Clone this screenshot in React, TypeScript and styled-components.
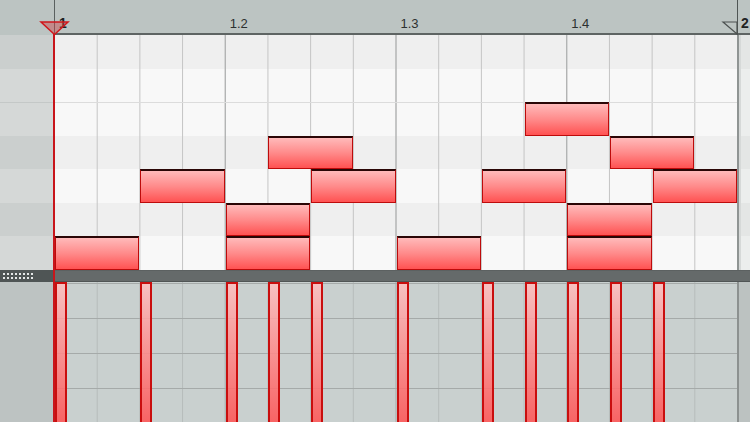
import React from 'react';
import styled, { createGlobalStyle } from 'styled-components';

const STEP = 683 / 16;
const BEAT = STEP * 4;

const GlobalStyle = createGlobalStyle`
  *, *::before, *::after { box-sizing: border-box; }
  html, body { margin: 0; padding: 0; background: #c9d0cf; }
  body { font-family: 'Liberation Sans', Arial, sans-serif; }
`;

const Editor = styled.div`
  position: relative;
  width: 750px;
  height: 422px;
  overflow: hidden;
  display: flex;
  flex-direction: column;
`;

const Section = styled.div<{ $height: number }>`
  display: grid;
  grid-template-columns: 54px 683px 1fr;
  height: ${(p) => p.$height}px;
  flex: none;
`;

/* ruler */
const Ruler = styled(Section)`
  background: #bcc4c2;
  box-shadow: inset 0 -2px #5e6463;
`;

const RulerGutter = styled.div`
  background: #bcc4c2;
`;

const RulerTrack = styled.div`
  display: grid;
  grid-template-columns: repeat(4, 1fr);
  background-image: linear-gradient(to right, #5a605f 1px, transparent 1px);
`;

const RulerCell = styled.div`
  display: flex;
  align-items: flex-end;
  padding: 0 0 5px 5px;
`;

const RulerLabel = styled.span<{ $bar?: boolean }>`
  font-size: ${(p) => (p.$bar ? 14 : 13)}px;
  font-weight: ${(p) => (p.$bar ? 700 : 400)};
  line-height: 1;
  color: ${(p) => (p.$bar ? '#1e2222' : '#2c3030')};
`;

const RulerEnd = styled.div`
  display: flex;
  align-items: flex-end;
  padding: 0 0 5px 4px;
  background-image: linear-gradient(to right, #4f5554 1px, transparent 1px);
`;

/* note editor */
const KeyColumn = styled.div`
  display: grid;
  grid-template-rows: repeat(7, 1fr);
`;

const KeyRow = styled.div<{ $black: boolean; $octave?: boolean }>`
  background: ${(p) => (p.$black ? '#cbcfce' : '#d5d8d7')};
  box-shadow: ${(p) => (p.$octave ? 'inset 0 1px #c4c8c7' : 'none')};
`;

const NoteGrid = styled.div`
  display: grid;
  grid-template-columns: repeat(16, 1fr);
  grid-template-rows: repeat(7, 1fr);
`;

const LaneRow = styled.div<{ $row: number; $black: boolean; $octave?: boolean }>`
  grid-column: 1 / -1;
  grid-row: ${(p) => p.$row + 1};
  background-color: ${(p) => (p.$black ? '#efefef' : '#f8f8f8')};
  background-image:
    linear-gradient(to right, #a9abab 1px, transparent 1px),
    linear-gradient(to right, #c4c4c4 1px, transparent 1px);
  background-size: ${BEAT}px 100%, ${STEP}px 100%;
  box-shadow: ${(p) => (p.$octave ? 'inset 0 1px #dcdcdc' : 'none')};
`;

const Note = styled.div<{ $col: number; $row: number }>`
  grid-column: ${(p) => p.$col + 1} / span 2;
  grid-row: ${(p) => p.$row + 1};
  margin-left: 1px;
  border: 1px solid #bd0b0b;
  border-top: 2px solid #2a0606;
  background: linear-gradient(to bottom, #ffbaba 0%, #ff8a8a 50%, #ff5252 100%);
`;

const OutsideColumn = styled.div`
  display: grid;
  grid-template-rows: repeat(7, 1fr);
  border-left: 2px solid #8f9493;
`;

const OutsideRow = styled.div<{ $black: boolean }>`
  background: ${(p) => (p.$black ? '#e4e6e5' : '#eceeed')};
  box-shadow: inset 2px 0 #d6d9d8;
`;

/* divider */
const Divider = styled.div`
  display: grid;
  grid-template-columns: 54px 1fr;
  height: 12px;
  flex: none;
  background: #656a6a;
  box-shadow: inset 0 -1px #505555, inset 0 1px #5c6161;
`;

const Grip = styled.div`
  display: flex;
  align-items: center;
  padding-left: 3px;
  background: #4f5555;
`;

const GripDots = styled.div`
  display: grid;
  grid-template-columns: repeat(8, 2px);
  grid-template-rows: repeat(2, 2px);
  gap: 2px;
`;

const Dot = styled.span`
  background: #e4e7e7;
`;

/* velocity lane */
const VelocityGutter = styled.div`
  background: #bdc3c2;
  box-shadow: inset -1px 0 #b3b9b8;
`;

const VelocityLane = styled.div`
  display: grid;
  grid-template-columns: repeat(16, 1fr);
  background-color: #c9d0cf;
  background-image:
    linear-gradient(to bottom, transparent 34px, #a5aaa9 34px),
    linear-gradient(to right, #adb3b2 1px, transparent 1px),
    linear-gradient(to right, #b6bcbb 1px, transparent 1px);
  background-size: 100% 35px, ${BEAT}px 100%, ${STEP}px 100%;
  background-position: 0 2px, 0 0, 0 0;
`;

const VelocityBar = styled.div<{ $col: number }>`
  grid-column: ${(p) => p.$col + 1};
  grid-row: 1;
  width: 12px;
  margin-left: 1px;
  border: 2px solid #c90e0e;
  border-bottom: none;
  background: linear-gradient(to bottom, rgba(255, 190, 190, 0.85), rgba(255, 85, 85, 0.88));
`;

const VelocityOutside = styled.div`
  background: #bcc2c1;
  border-left: 2px solid #8c9190;
`;

/* overlays */
const StartLine = styled.div`
  position: absolute;
  left: 53px;
  top: 34px;
  bottom: 0;
  width: 2px;
  background: #c8151b;
`;

const Marker = styled.svg<{ $left: number }>`
  position: absolute;
  left: ${(p) => p.$left}px;
  top: 21px;
  overflow: visible;
`;

const rows = [
  { black: true },
  { black: false },
  { black: false, octave: true },
  { black: true },
  { black: false },
  { black: true },
  { black: false },
];

const notes = [
  { col: 0, row: 6 },
  { col: 2, row: 4 },
  { col: 4, row: 5 },
  { col: 4, row: 6 },
  { col: 5, row: 3 },
  { col: 6, row: 4 },
  { col: 8, row: 6 },
  { col: 10, row: 4 },
  { col: 11, row: 2 },
  { col: 12, row: 5 },
  { col: 12, row: 6 },
  { col: 13, row: 3 },
  { col: 14, row: 4 },
];

const beats = ['1', '1.2', '1.3', '1.4'];

const App = () => {
  const velocityCols = Array.from(new Set(notes.map((n) => n.col))).sort((a, b) => a - b);
  return (
    <Editor>
      <GlobalStyle />
      <Ruler $height={35}>
        <RulerGutter />
        <RulerTrack>
          {beats.map((b, i) => (
            <RulerCell key={b}>
              <RulerLabel $bar={i === 0}>{b}</RulerLabel>
            </RulerCell>
          ))}
        </RulerTrack>
        <RulerEnd>
          <RulerLabel $bar>2</RulerLabel>
        </RulerEnd>
      </Ruler>

      <Section $height={235}>
        <KeyColumn>
          {rows.map((r, i) => (
            <KeyRow key={i} $black={r.black} $octave={r.octave} />
          ))}
        </KeyColumn>
        <NoteGrid>
          {rows.map((r, i) => (
            <LaneRow key={i} $row={i} $black={r.black} $octave={r.octave} />
          ))}
          {notes.map((n, i) => (
            <Note key={i} $col={n.col} $row={n.row} />
          ))}
        </NoteGrid>
        <OutsideColumn>
          {rows.map((r, i) => (
            <OutsideRow key={i} $black={r.black} />
          ))}
        </OutsideColumn>
      </Section>

      <Divider>
        <Grip>
          <GripDots>
            {Array.from({ length: 16 }, (_, i) => (
              <Dot key={i} />
            ))}
          </GripDots>
        </Grip>
        <div />
      </Divider>

      <Section $height={140}>
        <VelocityGutter />
        <VelocityLane>
          {velocityCols.map((c) => (
            <VelocityBar key={c} $col={c} />
          ))}
        </VelocityLane>
        <VelocityOutside />
      </Section>

      <StartLine />
      <Marker $left={40} width={29} height={14} viewBox="0 0 29 14">
        <path d="M1 1 H28 L14.5 13.5 Z" fill="rgba(205, 70, 70, 0.45)" stroke="#d0171c" strokeWidth="1.5" />
      </Marker>
      <Marker $left={722} width={16} height={14} viewBox="0 0 16 14">
        <path d="M1 1 H15 V13 Z" fill="none" stroke="#4c5150" strokeWidth="1.2" />
      </Marker>
    </Editor>
  );
};

export default App;
